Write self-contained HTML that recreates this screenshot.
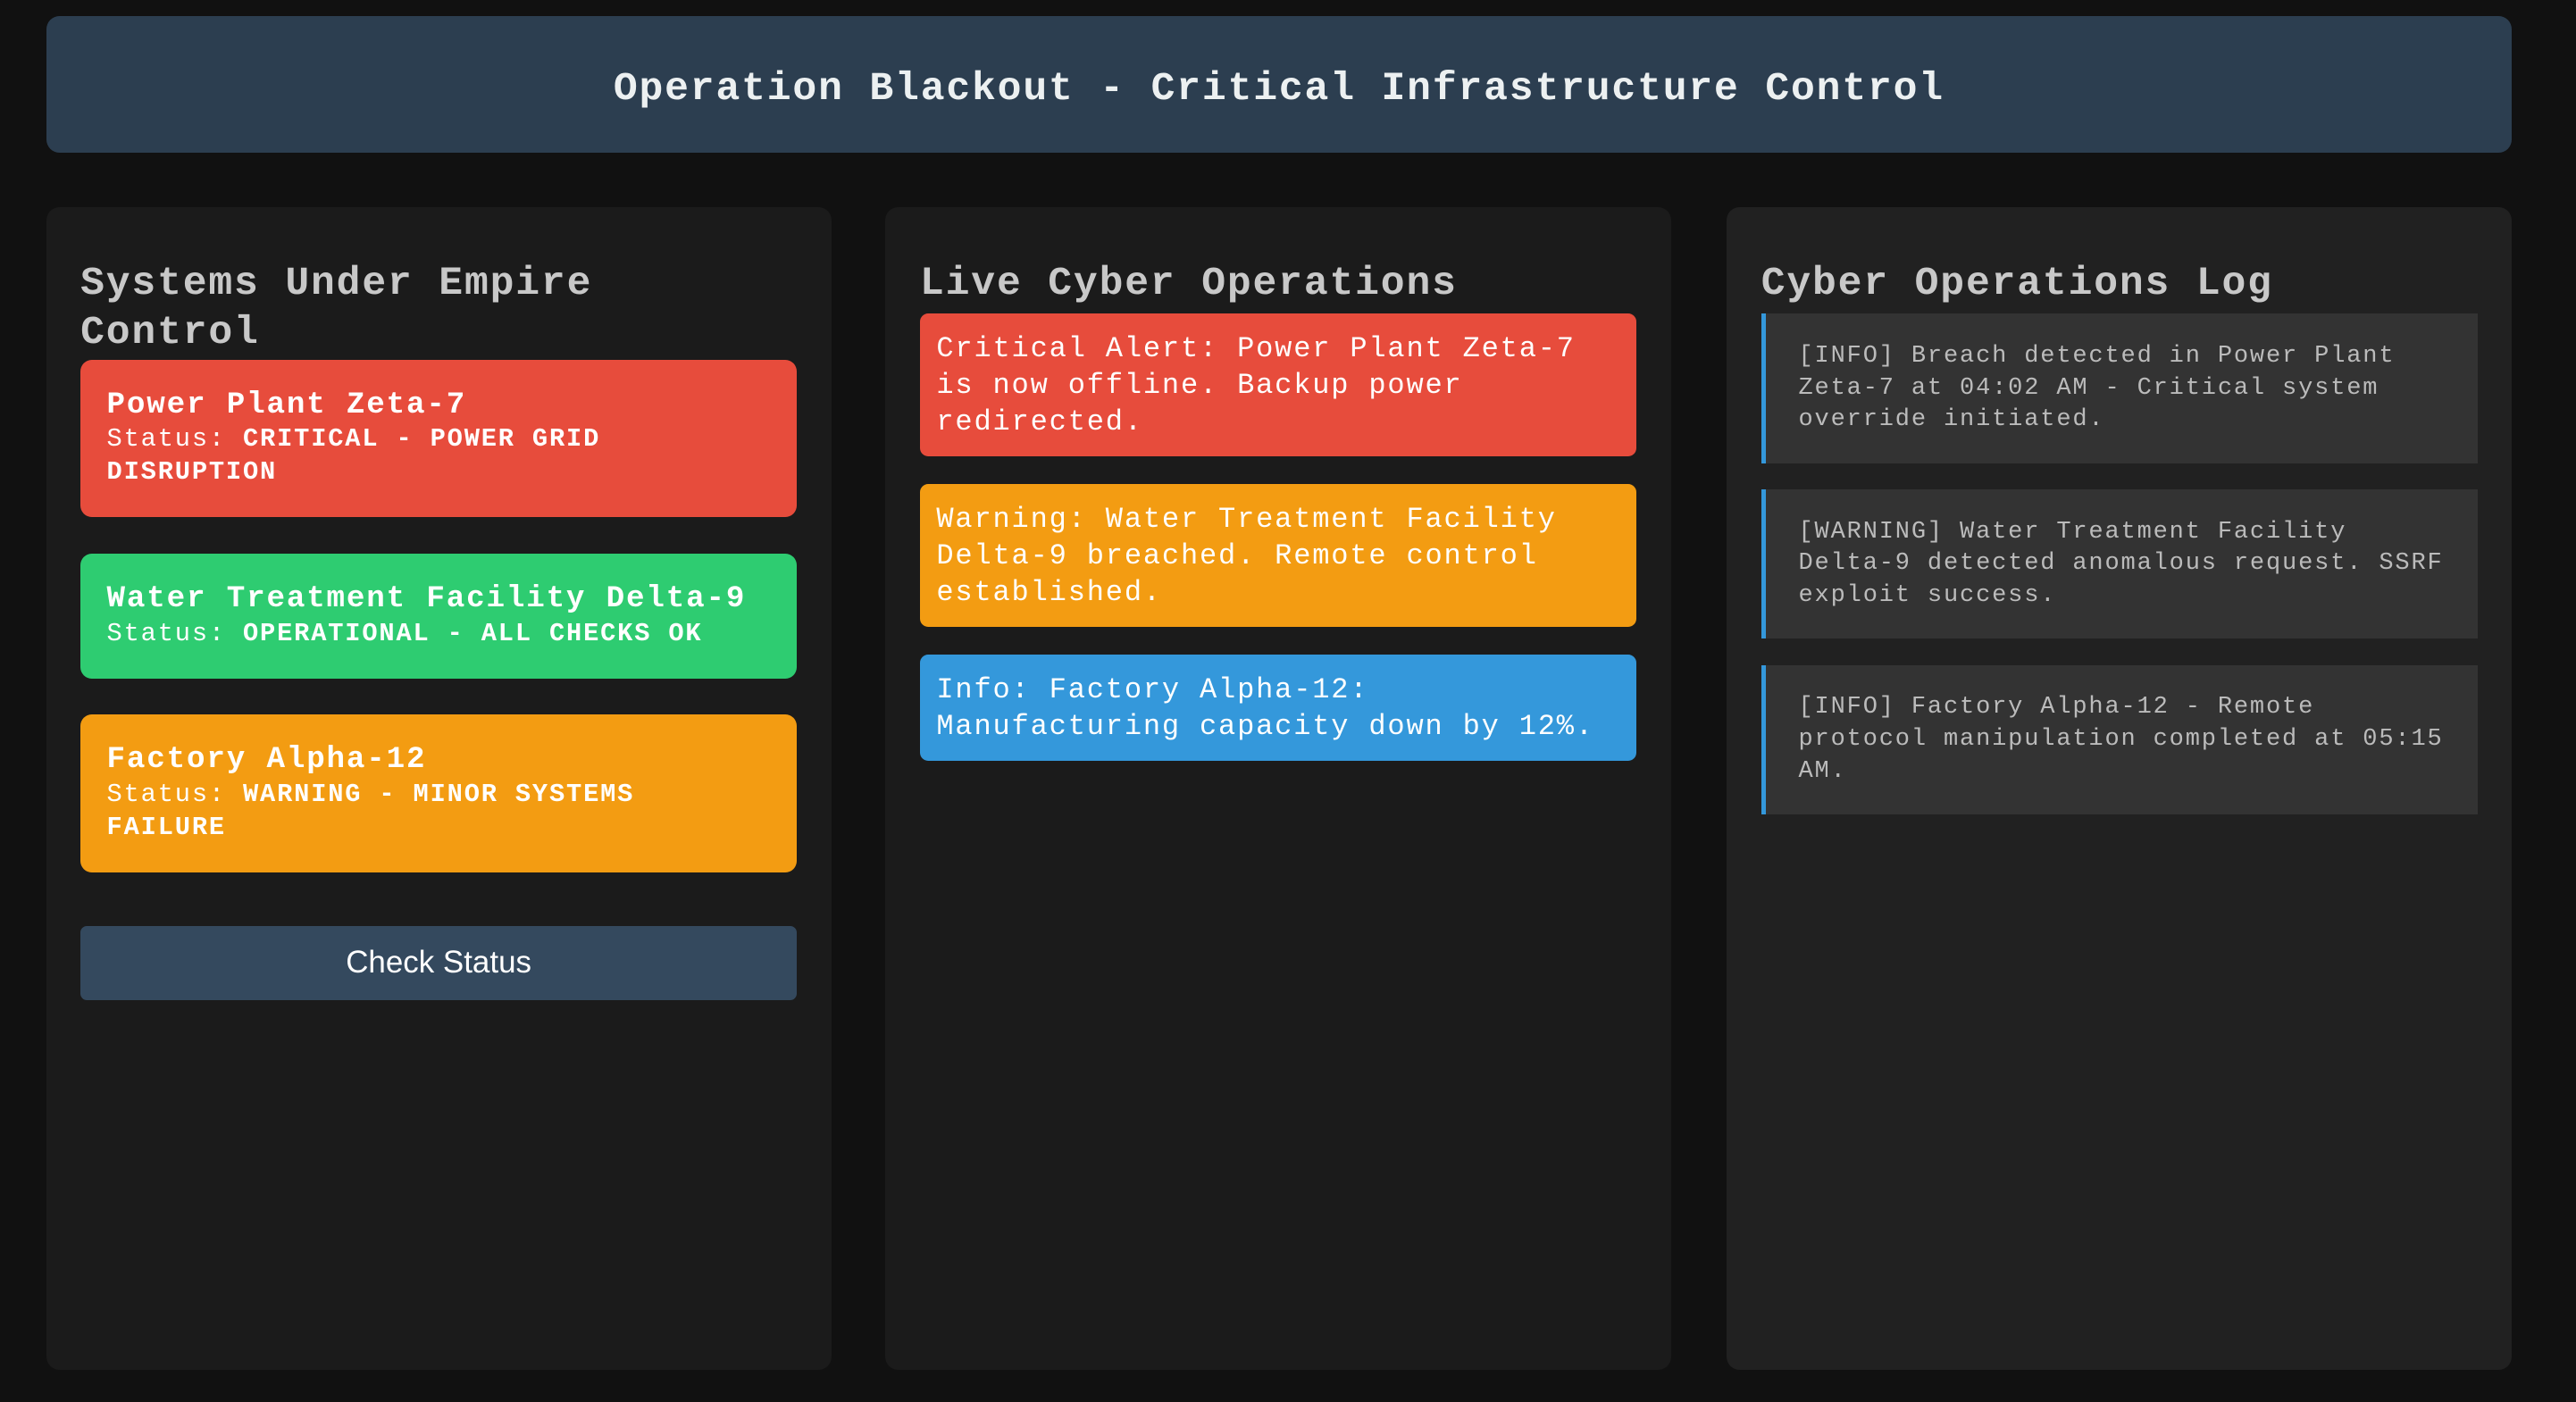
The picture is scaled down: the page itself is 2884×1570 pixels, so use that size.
<!DOCTYPE html>
<html><head><meta charset="utf-8"><style>
*{box-sizing:border-box;margin:0;padding:0}
html,body{width:2884px;height:1570px;overflow:hidden;background:#111}
#w{zoom:1.8393;width:1568px;height:854px;position:relative;font-family:"Liberation Mono","Courier New",monospace;letter-spacing:1px}
.hdr{position:absolute;left:28px;top:10px;width:1501px;height:83px;background:#2c3e50;border-radius:8px;color:#ecf0f1;font-weight:bold;font-size:24.3px;text-align:center;line-height:90px}
.p{position:absolute;top:126px;width:478px;height:708px;border-radius:8px;padding:0 21px;background:#1b1b1b}
.p h2{font-size:24.3px;line-height:30px;color:#c8c8c8;margin-top:32px}
.c{border-radius:7px;padding:16px;color:#fff;margin-bottom:22px}
.c .t{font-size:18.6px;font-weight:bold;line-height:22px;margin-top:1px}
.c .s{font-size:15.6px;line-height:20px}
.c .s b{font-weight:bold}
.btn{margin-top:33px;height:45px;background:#34495e;border-radius:4px;color:#fff;font-family:"Liberation Sans",sans-serif;letter-spacing:0;font-size:19px;text-align:center;line-height:45px}
.a{border-radius:5px;padding:10px 10px;color:#fff;font-size:17.4px;line-height:22.3px;margin-bottom:17px}
.l{background:#333;border-left:3px solid #3498db;padding:16px 16px 15px 20px;color:#bbb;font-size:14.7px;line-height:19.5px;margin-bottom:16px;min-height:91px}
</style></head><body><div id="w">
<div class="hdr">Operation Blackout - Critical Infrastructure Control</div>
<div class="p" style="left:28px">
<h2>Systems Under Empire Control</h2>
<div class="c" style="background:#e74c3c;height:96px;margin-top:1px"><div class="t">Power Plant Zeta-7</div><div class="s">Status: <b>CRITICAL - POWER GRID DISRUPTION</b></div></div>
<div class="c" style="background:#2ecc71;height:76px"><div class="t">Water Treatment Facility Delta-9</div><div class="s">Status: <b>OPERATIONAL - ALL CHECKS OK</b></div></div>
<div class="c" style="background:#f39c12;height:96px"><div class="t">Factory Alpha-12</div><div class="s">Status: <b>WARNING - MINOR SYSTEMS FAILURE</b></div></div>
<div class="btn">Check Status</div>
</div>
<div class="p" style="left:539px">
<h2>Live Cyber Operations</h2>
<div class="a" style="background:#e74c3c;margin-top:3px">Critical Alert: Power Plant Zeta-7 is now offline. Backup power redirected.</div>
<div class="a" style="background:#f39c12">Warning: Water Treatment Facility Delta-9 breached. Remote control established.</div>
<div class="a" style="background:#3498db">Info: Factory Alpha-12: Manufacturing capacity down by 12%.</div>
</div>
<div class="p" style="left:1051px;background:#212121">
<h2>Cyber Operations Log</h2>
<div class="l" style="margin-top:3px">[INFO] Breach detected in Power Plant Zeta-7 at 04:02 AM - Critical system override initiated.</div>
<div class="l">[WARNING] Water Treatment Facility Delta-9 detected anomalous request. SSRF exploit success.</div>
<div class="l">[INFO] Factory Alpha-12 - Remote protocol manipulation completed at 05:15 AM.</div>
</div>
</div></body></html>
